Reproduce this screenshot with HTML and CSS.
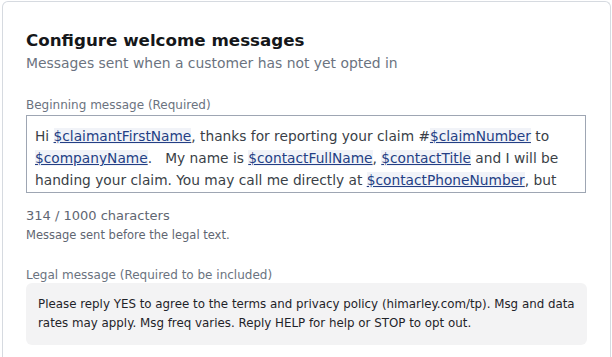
FILE: index.html
```html
<!DOCTYPE html>
<html lang="en">
<head>
    <meta charset="UTF-8">
    <meta name="viewport" content="width=device-width, initial-scale=1.0">
    <title>Welcome messages</title>
    <link rel="stylesheet" href="styles.css">
</head>
<body>
    <div class="card">
        <h2 class="title">Configure welcome messages</h2>
        <div class="subtitle">Messages sent when a customer has not yet opted in</div>

        <div class="field">
            <div class="label">Beginning message (Required)</div>
            <div class="editor">
                Hi <span class="var">$claimantFirstName</span>, thanks for reporting your claim #<span class="var">$claimNumber</span> to <span class="var">$companyName</span>. &nbsp; My name is <span class="var">$contactFullName</span>, <span class="var">$contactTitle</span> and I will be handing your claim. You may call me directly at <span class="var">$contactPhoneNumber</span>, but text is the best way to reach me. You can also email me at <span class="var">$contactEmail</span>. Thank you.
            </div>
            <div class="count">314 / 1000 characters</div>
            <div class="hint">Message sent before the legal text.</div>
        </div>

        <div class="field legal-field">
            <div class="label">Legal message (Required to be included)</div>
            <div class="legal-box">
                Please reply YES to agree to the terms and privacy policy (himarley.com/tp). Msg and data rates may apply. Msg freq varies. Reply HELP for help or STOP to opt out.
            </div>
        </div>
    </div>
</body>
</html>
```

FILE: styles.css
```css
body {
    font-family: "DejaVu Sans", sans-serif;
    margin: 0;
    padding: 1px 1px 0 2px;
    background-color: white;
    color: #1f2329;
    overflow: hidden;
}
.card {
    border: 1px solid #d6dae0;
    border-bottom: none;
    border-radius: 6px 6px 0 0;
    padding: 26px 23px 20px 23px;
    height: 370px;
    box-sizing: border-box;
}
.title {
    margin: 0;
    font-size: 16.7px;
    font-weight: bold;
    line-height: 24px;
    color: #15171a;
}
.subtitle {
    font-size: 13.9px;
    color: #6b7380;
    margin-top: 1px;
    line-height: 20px;
}
.field {
    margin-top: 24px;
}
.label {
    font-size: 12px;
    color: #6b7380;
    line-height: 16px;
    margin-bottom: 2px;
}
.editor {
    border: 1px solid #9ea6b3;
    height: 78px;
    box-sizing: border-box;
    overflow: hidden;
    padding: 9px 8px 0 8px;
    font-size: 13.75px;
    line-height: 22px;
    color: #3a3f47;
    margin-right: 1px;
}
.var {
    color: #243f85;
    text-decoration: underline;
    background-color: #f1f3f8;
}
.count {
    margin-top: 14px;
    font-size: 13px;
    color: #5f6672;
    line-height: 18px;
}
.hint {
    font-size: 11.5px;
    color: #5f6672;
    line-height: 16px;
    margin-top: 2px;
}
.legal-field {
    margin-top: 24px;
}
.legal-field .label {
    margin-bottom: 0;
}
.legal-box {
    background-color: #f3f3f4;
    border-radius: 6px;
    padding: 12px 8px 12px 12px;
    font-size: 11.85px;
    line-height: 19px;
    color: #1f2329;
}
```
